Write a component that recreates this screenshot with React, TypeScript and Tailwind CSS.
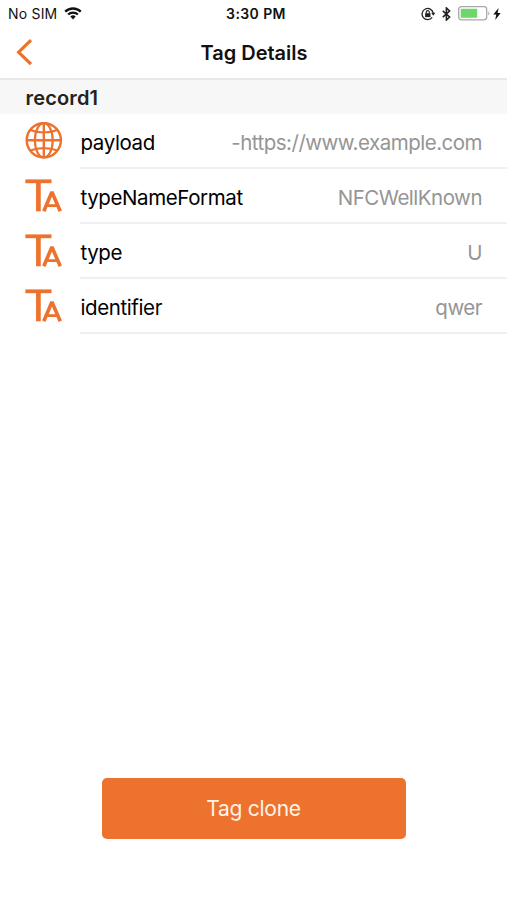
import React from 'react';

type IconKind = 'globe' | 'text';

interface RecordField {
  icon: IconKind;
  label: string;
  value: string;
}

const fields: RecordField[] = [
  { icon: 'globe', label: 'payload', value: '-https://www.example.com' },
  { icon: 'text', label: 'typeNameFormat', value: 'NFCWellKnown' },
  { icon: 'text', label: 'type', value: 'U' },
  { icon: 'text', label: 'identifier', value: 'qwer' },
];

const WifiIcon = () => (
  <svg width="18" height="13" viewBox="0 0 18 13" fill="none" stroke="#111">
    <path d="M1.2 4.6a11.2 11.2 0 0 1 15.6 0" strokeWidth="2.4" />
    <path d="M4.1 7.5a7.1 7.1 0 0 1 9.8 0" strokeWidth="2.2" />
    <path d="M9 12.4 6.3 9.6a3.9 3.9 0 0 1 5.4 0z" fill="#111" stroke="none" />
  </svg>
);

const RotationLockIcon = () => (
  <svg width="15" height="14" viewBox="0 0 15 14" fill="none" stroke="#222">
    <path d="M11.2 10.4A5.6 5.6 0 1 1 12.2 6" strokeWidth="1.3" />
    <path d="M10.2 5.8h4.2l-2.1 3z" fill="#222" stroke="none" />
    <rect x="4.1" y="6.2" width="5.4" height="3.9" fill="#222" stroke="none" />
    <path d="M5.3 6.6V5.1a1.5 1.5 0 0 1 3 0v1.5" strokeWidth="1.1" />
  </svg>
);

const BluetoothIcon = () => (
  <svg width="9" height="14" viewBox="0 0 9 14" fill="none" stroke="#222" strokeWidth="1.6">
    <path d="m.8 3.8 6.8 6.2-3.2 3V1l3.2 3L.8 10.2" />
  </svg>
);

const BatteryIcon = () => (
  <svg width="32" height="15" viewBox="0 0 32 15" fill="none">
    <rect x=".7" y=".7" width="28" height="13.2" rx="2.8" stroke="#a9a9a9" strokeWidth="1.3" />
    <rect x="2.7" y="2.8" width="16.5" height="9" rx=".6" fill="#6fd66c" />
    <path d="M30.3 5.2c1.5.6 1.5 3.6 0 4.2z" fill="#a9a9a9" />
  </svg>
);

const BoltIcon = () => (
  <svg width="8" height="12" viewBox="0 0 8 12" fill="#111">
    <path d="M5.6 0 .3 6.6h3L2.2 12l5.5-7H4.6z" />
  </svg>
);

const GlobeIcon = () => (
  <svg width="38" height="38" viewBox="0 0 38 38" fill="none" stroke="#ec722e" strokeWidth="2.4">
    <circle cx="18.8" cy="19.3" r="17.1" />
    <ellipse cx="18.8" cy="19.3" rx="8.9" ry="17.1" strokeWidth="2.2" />
    <path d="M18.8 2v34.5M1.8 19.3h34" />
    <path d="M5.4 9c7.4 3.3 19.4 3.3 26.8 0M5.4 29.6c7.4-3.3 19.4-3.3 26.8 0" strokeWidth="2.2" />
  </svg>
);

const TextIcon = () => (
  <svg width="38" height="38" viewBox="0 0 38 38" fill="none" stroke="#ec722e">
    <line x1=".4" y1="5.3" x2="26.5" y2="5.3" strokeWidth="3.8" />
    <line x1="13.4" y1="5.3" x2="13.4" y2="35.3" strokeWidth="4.7" />
    <polyline points="18.8,35.3 26.9,16 35.3,35.3" strokeWidth="3.6" strokeLinejoin="bevel" />
    <line x1="21.2" y1="29.6" x2="33" y2="29.6" strokeWidth="2.8" />
  </svg>
);

const FieldRow = ({ field }: { field: RecordField }) => (
  <li className="flex h-[55px] items-start pl-[25px]">
    <div className="w-[55px] shrink-0 pt-[7px]">
      {field.icon === 'globe' ? <GlobeIcon /> : <TextIcon />}
    </div>
    <div className="flex h-full flex-1 items-center justify-between border-b-2 border-[#f0f0f1] pt-[6px] pr-[25px] pl-[0.5px] text-[20.5px]">
      <span className="tracking-[-0.4px] text-black">{field.label}</span>
      <span className="tracking-[-0.5px] text-[#959595]">{field.value}</span>
    </div>
  </li>
);

const App: React.FC = () => {
  return (
    <div className="flex h-[900px] w-full flex-col bg-white font-['Inter',sans-serif]">
      <div className="grid h-[27px] grid-cols-3 items-center pl-2 pr-[6px] text-[#111]">
        <div className="flex items-center gap-[7px] text-[14px] tracking-[0.2px]">
          <span>No SIM</span>
          <WifiIcon />
        </div>
        <span className="pl-[3px] text-center text-[14px] font-semibold tracking-[0.4px]">3:30 PM</span>
        <div className="flex items-center justify-end">
          <RotationLockIcon />
          <span className="ml-[6px]">
            <BluetoothIcon />
          </span>
          <span className="ml-[7px]">
            <BatteryIcon />
          </span>
          <span className="ml-[3px]">
            <BoltIcon />
          </span>
        </div>
      </div>

      <header className="grid h-[53px] grid-cols-[80px_1fr_80px] items-center border-b-2 border-[#e7e7e8]">
        <button className="pl-[16px] pb-px" aria-label="Back">
          <svg width="17" height="28" viewBox="0 0 17 28" fill="none" stroke="#ec722e" strokeWidth="3.2">
            <path d="M15 2.2 2.6 14.2 15 26.2" />
          </svg>
        </button>
        <h1 className="pl-px text-center text-[20px] font-semibold text-[#111]">Tag Details</h1>
      </header>

      <h2 className="flex h-[34px] items-center bg-[#f7f7f7] pl-[25.5px] pt-px text-[20px] font-semibold tracking-[0.15px] text-[#222]">
        record1
      </h2>

      <ul>
        {fields.map((field) => (
          <FieldRow key={field.label} field={field} />
        ))}
      </ul>

      <div className="mt-auto flex justify-center pb-[61px]">
        <button className="h-[61px] w-[304px] rounded-[5px] bg-[#ec722e] pt-px text-[21px] tracking-[-0.25px] text-[#fff3e8]">
          Tag clone
        </button>
      </div>
    </div>
  );
};

export default App;
